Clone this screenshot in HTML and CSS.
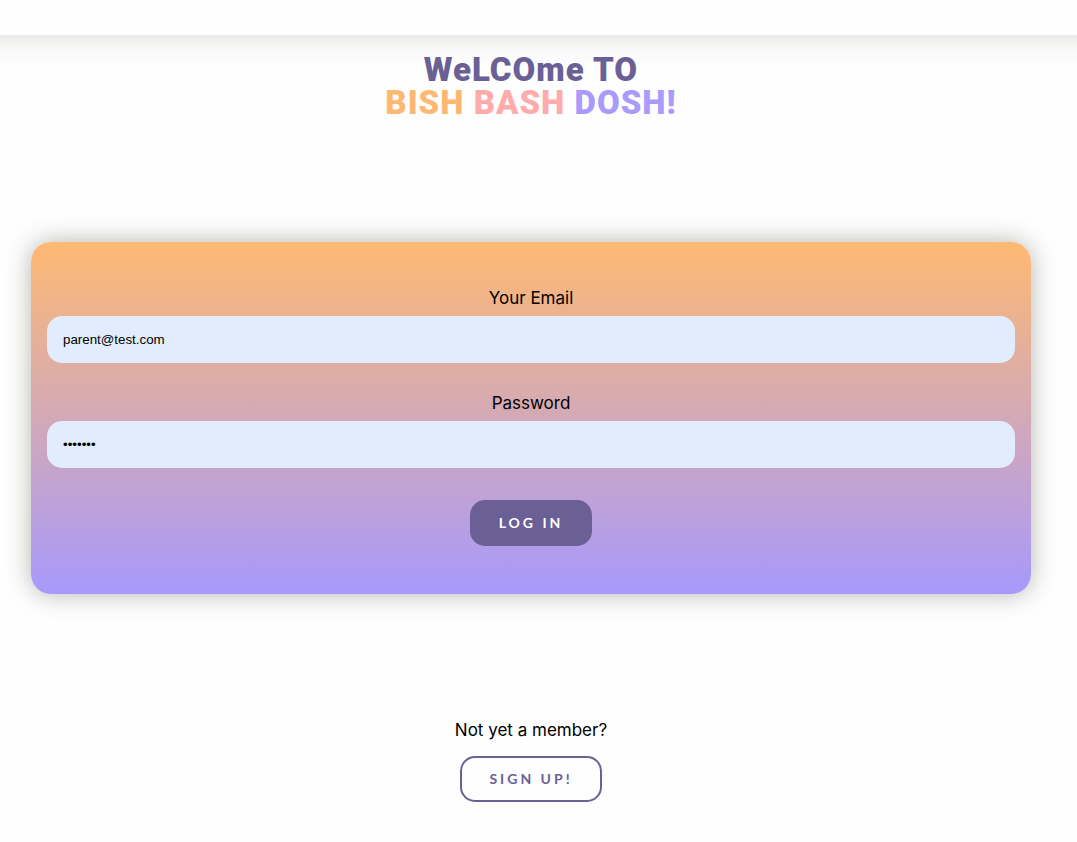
FILE: index.html
```html
<!DOCTYPE html>
<html lang="en">
<head>
  <meta charset="utf-8">
  <meta name="viewport" content="width=device-width, initial-scale=1">
  <title>Bish Bash Dosh</title>
  <link rel="stylesheet" href="styles.css">
</head>
<body>
  <header class="topbar"></header>
  <main class="page">
    <h1 class="title">
      <span class="title-line">WeLCOme TO</span>
      <span class="title-line"><span class="bish">BISH</span> <span class="bash">BASH</span> <span class="dosh">DOSH!</span></span>
    </h1>
    <form class="card">
      <div class="field">
        <label for="email">Your Email</label>
        <input id="email" type="email" value="parent@test.com">
      </div>
      <div class="field">
        <label for="password">Password</label>
        <input id="password" type="password" value="1234567">
      </div>
      <button class="button" type="button">LOG IN</button>
    </form>
    <section class="join">
      <p class="join-text">Not yet a member?</p>
      <button class="button button-outline" type="button">SIGN UP!</button>
    </section>
  </main>
</body>
</html>
```
FILE: styles.css
```css
* {
  box-sizing: border-box;
}

body {
  margin: 0;
  background: #fefefe;
  color: #000;
  font-family: "Inter", sans-serif;
  font-size: 17px;
  line-height: 20px;
}

.topbar {
  height: 35px;
}

.page {
  display: flex;
  flex-direction: column;
  align-items: center;
  padding: 18px 46px 40px 31px;
  background: linear-gradient(#ebebe9, #f5f5f4 10px, #fafafa 18px, #fefefe 34px);
}

.title {
  margin: 0;
  font-family: "Roboto", sans-serif;
  font-weight: 900;
  font-size: 33px;
  line-height: 33px;
  letter-spacing: 1px;
  text-align: center;
  color: #6a6095;
}

.title-line {
  display: block;
}

.bish {
  color: #feb872;
}

.bash {
  color: #ffabab;
}

.dosh {
  color: #a99afc;
}

.card {
  display: flex;
  flex-direction: column;
  align-items: center;
  gap: 32px;
  width: 100%;
  max-width: 1000px;
  margin-top: 123px;
  padding: 46px 16px 48px;
  border-radius: 20px;
  background: linear-gradient(#feb972, #a799fc);
  box-shadow: 0 0 24px rgba(70, 70, 60, 0.4);
}

.field {
  display: flex;
  flex-direction: column;
  gap: 8px;
  width: 100%;
  text-align: center;
}

.field + .field {
  margin-top: -2px;
}

.field input {
  width: 100%;
  height: 47px;
  padding: 0 16px;
  border: 0;
  border-radius: 15px;
  background: #e1edfc;
  color: #000;
  font-family: "Liberation Sans", Arial, sans-serif;
}

.button {
  padding: 12px 27px;
  border: 2px solid #6a6095;
  border-radius: 15px;
  background: #6a6095;
  color: #fff;
  font-family: "Lato", sans-serif;
  font-weight: 700;
  font-size: 14px;
  line-height: 18px;
  letter-spacing: 3px;
}

.button-outline {
  background: transparent;
  color: #6a6095;
}

.join {
  display: flex;
  flex-direction: column;
  align-items: center;
  gap: 16px;
  margin-top: 126px;
}

.join-text {
  margin: 0;
}
```
